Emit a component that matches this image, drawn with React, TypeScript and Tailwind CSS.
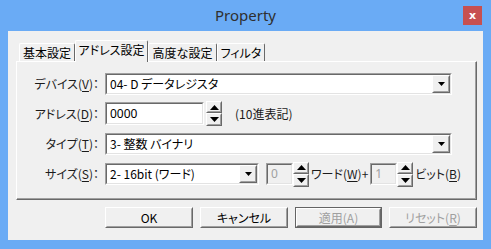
import React from 'react'

const jp = "font-['Noto_Sans_CJK_JP','Noto_Sans',sans-serif] [font-feature-settings:'palt']"

function Raised({ className = '', children }: { className?: string; children?: React.ReactNode }) {
  return (
    <div className={'flex border border-t-white border-l-white border-r-[#696969] border-b-[#696969] ' + className}>
      <div className="flex flex-1 items-center justify-center border border-t-[#f0f0f0] border-l-[#f0f0f0] border-r-[#a0a0a0] border-b-[#a0a0a0] bg-[#f0f0f0]">
        {children}
      </div>
    </div>
  )
}

function Sunken({ className = '', children }: { className?: string; children?: React.ReactNode }) {
  return (
    <div className={'flex border border-t-[#a0a0a0] border-l-[#a0a0a0] border-r-white border-b-white ' + className}>
      <div className="flex flex-1 items-stretch border border-t-[#696969] border-l-[#696969] border-r-[#e3e3e3] border-b-[#e3e3e3]">
        {children}
      </div>
    </div>
  )
}

function DownArrow({ w = 7, h = 4 }: { w?: number; h?: number }) {
  return (
    <svg width={w} height={h} viewBox={`0 0 ${w} ${h}`}>
      <polygon points={`0,0 ${w},0 ${w / 2},${h}`} fill="#000" />
    </svg>
  )
}

function UpArrow({ w = 9, h = 5 }: { w?: number; h?: number }) {
  return (
    <svg width={w} height={h} viewBox={`0 0 ${w} ${h}`}>
      <polygon points={`0,${h} ${w},${h} ${w / 2},0`} fill="#000" />
    </svg>
  )
}

function Combo({ width, text }: { width: string; text: string }) {
  return (
    <Sunken className={width + ' h-[22px]'}>
      <div className="flex flex-1 items-center bg-white pl-[3px] text-[12px] leading-none text-black">{text}</div>
      <Raised className="w-[18px]">
        <DownArrow />
      </Raised>
    </Sunken>
  )
}

function Spin() {
  return (
    <div className="flex h-[25px] w-[16px] flex-col">
      <Raised className="h-[12px]">
        <UpArrow />
      </Raised>
      <Raised className="h-[13px]">
        <svg width={9} height={5} viewBox="0 0 9 5">
          <polygon points="0,0 9,0 4.5,5" fill="#000" />
        </svg>
      </Raised>
    </div>
  )
}

function Label({ text, k }: { text: string; k: string }) {
  return (
    <div className="w-[82px] shrink-0 text-right text-[12px] leading-none text-[#1b1b1b]">
      {text}(<span className="underline underline-offset-2">{k}</span>)：
    </div>
  )
}

function Tab({ label, active = false, width }: { label: string; active?: boolean; width: string }) {
  if (active) {
    return (
      <div className={'relative z-10 -mb-px flex h-[22px] items-start justify-center rounded-t-[2px] border-t border-l border-r border-t-white border-l-white border-r-[#696969] bg-[#f0f0f0] pt-[3px] text-[12px] leading-none text-black ' + width}>
        {label}
      </div>
    )
  }
  return (
    <div className={'flex h-[18px] items-center justify-center rounded-t-[2px] border-t border-l border-r border-t-white border-l-white border-r-[#696969] text-[12px] leading-none text-black ' + width}>
      {label}
    </div>
  )
}

function Button({ children, disabled = false, framed = false }: { children: React.ReactNode; disabled?: boolean; framed?: boolean }) {
  const text = disabled ? 'text-[#a0a0a0]' : 'text-black'
  if (framed) {
    return (
      <div className="flex h-[21px] w-[87px] border border-[#646464]">
        <Raised className="flex-1">
          <span className={'text-[12px] leading-none ' + text}>{children}</span>
        </Raised>
      </div>
    )
  }
  return (
    <Raised className="h-[21px] w-[88px]">
      <span className={'text-[12px] leading-none ' + text}>{children}</span>
    </Raised>
  )
}

export default function App() {
  return (
    <div className={'flex h-[249px] w-[491px] flex-col bg-[#6aabf5] ' + jp}>
      {/* title bar */}
      <div className="relative flex h-[31px] items-center justify-center">
        <span className="font-['Noto_Sans',sans-serif] text-[15px] leading-none text-[#2f2f2f]">Property</span>
        <div className="absolute right-[9px] top-[6px] flex h-[19px] w-[19px] items-center justify-center bg-[#c75050] font-['DejaVu_Sans',sans-serif] text-[11px] font-bold leading-none text-white">
          x
        </div>
      </div>

      {/* client area */}
      <div className="mx-[8px] mb-[9px] flex flex-1 flex-col bg-[#f0f0f0] pt-[9px]">
        <div className="ml-[11px] flex h-[21px] items-end">
          <Tab label="基本設定" width="w-[56px]" />
          <Tab label="アドレス設定" width="w-[73px]" active />
          <Tab label="高度な設定" width="w-[69px]" />
          <Tab label="フィルタ" width="w-[48px]" />
        </div>

        <div className="ml-[8px] flex h-[139px] w-[461px] border border-t-white border-l-white border-r-[#696969] border-b-[#696969]">
          <div className="flex flex-1 flex-col border-r border-b border-r-[#a0a0a0] border-b-[#a0a0a0] pt-[11px]">
            <div className="flex h-[22px] items-center">
              <Label text="デバイス" k="V" />
              <div className="ml-[6px]">
                <Combo width="w-[347px]" text="04- D データレジスタ" />
              </div>
            </div>

            <div className="mt-[6px] flex h-[25px] items-center">
              <Label text="アドレス" k="D" />
              <Sunken className="ml-[6px] h-[23px] w-[99px]">
                <div className="flex flex-1 items-center bg-white pl-[3px] font-['Noto_Sans',sans-serif] text-[12px] leading-none text-black">0000</div>
              </Sunken>
              <div className="ml-[2px]">
                <Spin />
              </div>
              <span className="ml-[13px] text-[12px] leading-none text-[#1b1b1b]">(10進表記)</span>
            </div>

            <div className="mt-[7px] flex h-[22px] items-center">
              <Label text="タイプ" k="T" />
              <div className="ml-[6px]">
                <Combo width="w-[347px]" text="3- 整数 バイナリ" />
              </div>
            </div>

            <div className="mt-[8px] flex h-[22px] items-center">
              <Label text="サイズ" k="S" />
              <div className="ml-[6px]">
                <Combo width="w-[154px]" text="2- 16bit (ワード)" />
              </div>
              <Sunken className="ml-[7px] h-[22px] w-[27px]">
                <div className="flex flex-1 items-center pl-[3px] font-['Noto_Sans',sans-serif] text-[12px] leading-none text-[#a0a0a0]">0</div>
              </Sunken>
              <Spin />
              <span className="ml-[2px] text-[12px] leading-none text-[#1b1b1b]">
                ワード(<span className="underline underline-offset-2">W</span>)+
              </span>
              <Sunken className="ml-[2px] h-[22px] w-[27px]">
                <div className="flex flex-1 items-center pl-[3px] font-['Noto_Sans',sans-serif] text-[12px] leading-none text-[#a0a0a0]">1</div>
              </Sunken>
              <Spin />
              <span className="ml-[2px] text-[12px] leading-none text-[#1b1b1b]">
                ビット(<span className="underline underline-offset-2">B</span>)
              </span>
            </div>
          </div>
        </div>

        <div className="ml-[97px] mt-[7px] flex gap-[7px]">
          <Button>OK</Button>
          <Button>キャンセル</Button>
          <Button disabled framed>
            適用(<span className="underline underline-offset-2">A</span>)
          </Button>
          <Button disabled>
            リセット(<span className="underline underline-offset-2">R</span>)
          </Button>
        </div>
      </div>
    </div>
  )
}
